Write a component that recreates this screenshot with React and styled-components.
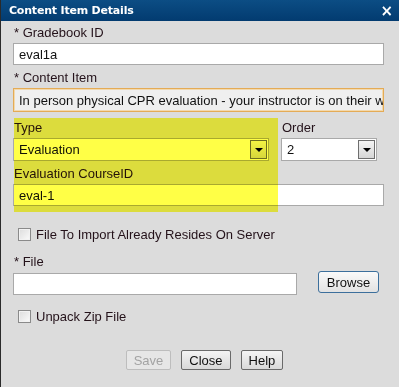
import React from 'react';
import styled, { createGlobalStyle } from 'styled-components';

const GlobalStyle = createGlobalStyle`
  body {
    margin: 0;
    background: #dcdcdc;
    font-family: "Liberation Sans", Arial, sans-serif;
  }
`;

const App = () => {
  return (
    <>
      <GlobalStyle />
      <Dialog>
        <TitleBar>
          <Title>Content Item Details</Title>
          <CloseX>×</CloseX>
        </TitleBar>
        <Body>
          <Label><Req>*</Req> Gradebook ID</Label>
          <TextInput>eval1a</TextInput>

          <Label style={{ marginTop: 5 }}><Req>*</Req> Content Item</Label>
          <TextInput focused>In person physical CPR evaluation - your instructor is on their way</TextInput>

          <SelectRow>
            <Column wide>
              <Label>Type</Label>
              <Select>
                <SelectValue>Evaluation</SelectValue>
                <ArrowButton><Arrow /></ArrowButton>
              </Select>
            </Column>
            <Column>
              <Label>Order</Label>
              <Select>
                <SelectValue>2</SelectValue>
                <ArrowButton><Arrow /></ArrowButton>
              </Select>
            </Column>
          </SelectRow>

          <Label style={{ marginTop: 5 }}>Evaluation CourseID</Label>
          <TextInput>eval-1</TextInput>

          <CheckRow style={{ marginTop: 21 }}>
            <CheckBox />
            <CheckText>File To Import Already Resides On Server</CheckText>
          </CheckRow>

          <Label style={{ marginTop: 12 }}><Req>*</Req> File</Label>
          <FileRow>
            <TextInput width="284px" />
            <BrowseButton>Browse</BrowseButton>
          </FileRow>

          <CheckRow style={{ marginTop: 14 }}>
            <CheckBox />
            <CheckText>Unpack Zip File</CheckText>
          </CheckRow>

          <ButtonBar>
            <Button disabled>Save</Button>
            <Button>Close</Button>
            <Button>Help</Button>
          </ButtonBar>
        </Body>
        <Highlight />
      </Dialog>
    </>
  );
};

export default App;

const Dialog = styled.div`
  position: relative;
  width: 399px;
  height: 387px;
  box-sizing: border-box;
  background: #dcdcdc;
  border-left: 1px solid #2a2a2a;
  overflow: hidden;
`;

const TitleBar = styled.div`
  height: 21px;
  margin-left: -1px;
  display: flex;
  align-items: center;
  justify-content: space-between;
  padding: 0 6px 0 9px;
  background: linear-gradient(#0c4d84, #023b70);
  color: #fff;
`;

const Title = styled.div`
  font-family: "DejaVu Sans", Verdana, sans-serif;
  font-weight: bold;
  font-size: 11px;
  letter-spacing: -0.2px;
`;

const CloseX = styled.div`
  font-family: "DejaVu Sans", sans-serif;
  font-weight: bold;
  font-size: 15px;
  line-height: 15px;
  margin-top: 2px;
`;

const Body = styled.div`
  padding: 4px 15px 0 12px;
  display: flex;
  flex-direction: column;
`;

const Label = styled.div`
  font-size: 13px;
  line-height: 15px;
  color: #24121a;
  padding-left: 1px;
  margin-bottom: 3px;
`;

const Req = styled.span`
  color: #24121a;
`;

const TextInput = styled.div`
  box-sizing: border-box;
  width: ${p => p.width || '371px'};
  height: ${p => (p.focused ? '24px' : '22px')};
  padding: 0 5px;
  display: flex;
  align-items: center;
  font-size: 13px;
  color: #111;
  white-space: nowrap;
  overflow: hidden;
  background: ${p => (p.focused ? '#efefef' : '#fff')};
  border: 1px solid ${p => (p.focused ? '#e4ab56' : '#a9a9a9')};
  box-shadow: ${p => (p.focused ? 'inset 0 0 0 1px #f3d9ad' : 'none')};
`;

const SelectRow = styled.div`
  display: flex;
  gap: 12px;
  margin-top: 8px;
`;

const Column = styled.div`
  display: flex;
  flex-direction: column;
  width: ${p => (p.wide ? '256px' : '96px')};
`;

const Select = styled.div`
  box-sizing: border-box;
  height: 23px;
  display: flex;
  align-items: center;
  justify-content: space-between;
  padding: 0 1px 0 5px;
  background: #fff;
  border: 1px solid #a9a9a9;
  font-size: 13px;
  color: #111;
`;

const SelectValue = styled.span``;

const ArrowButton = styled.div`
  box-sizing: border-box;
  width: 17px;
  height: 19px;
  display: flex;
  align-items: center;
  justify-content: center;
  border: 1px solid #6e6e6e;
  background: linear-gradient(#f4f4f4, #d6d6d6);
`;

const Arrow = styled.div`
  width: 0;
  height: 0;
  border-left: 4px solid transparent;
  border-right: 4px solid transparent;
  border-top: 4px solid #000;
  margin-top: 1px;
`;

const CheckRow = styled.div`
  display: flex;
  align-items: center;
  gap: 5px;
  padding-left: 5px;
`;

const CheckBox = styled.div`
  box-sizing: border-box;
  width: 13px;
  height: 13px;
  border: 1px solid #8a8a8a;
  background: linear-gradient(135deg, #dcdcdc, #fbfbfb);
  box-shadow: inset 0 0 0 1px #f2f2f2;
`;

const CheckText = styled.span`
  font-size: 13px;
  color: #24121a;
`;

const FileRow = styled.div`
  display: flex;
  align-items: flex-start;
  gap: 21px;
  margin-top: 1px;
`;

const BrowseButton = styled.div`
  box-sizing: border-box;
  width: 61px;
  height: 22px;
  margin-top: -2px;
  display: flex;
  align-items: center;
  justify-content: center;
  font-size: 13px;
  color: #111;
  border: 1px solid #3c6f9c;
  border-radius: 3px;
  background: linear-gradient(#fafafa, #e2e2e2);
`;

const ButtonBar = styled.div`
  display: flex;
  justify-content: center;
  gap: 10px;
  margin-top: 26px;
  padding-left: 12px;
`;

const Button = styled.div`
  box-sizing: border-box;
  height: 20px;
  padding: 0 7px;
  display: flex;
  align-items: center;
  font-size: 13px;
  color: ${p => (p.disabled ? '#a3a3a3' : '#111')};
  border: 1px solid ${p => (p.disabled ? '#bdbdbd' : '#6a6a6a')};
  border-radius: 2px;
  background: ${p => (p.disabled ? '#e6e6e6' : 'linear-gradient(#f4f4f4, #d9d9d9)')};
`;

const Highlight = styled.div`
  position: absolute;
  left: 13px;
  top: 118px;
  width: 264px;
  height: 94px;
  background: #ffff46;
  mix-blend-mode: multiply;
  pointer-events: none;
`;
